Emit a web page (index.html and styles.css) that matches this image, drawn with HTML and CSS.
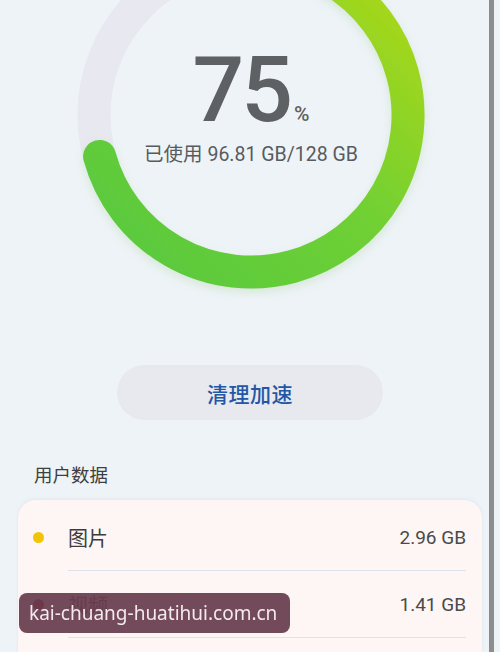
FILE: index.html
```html
<!DOCTYPE html>
<html lang="zh-CN">
<head>
<meta charset="utf-8">
<title>存储</title>
<link rel="stylesheet" href="styles.css">
</head>
<body>
<div class="page">
  <section class="hero">
    <svg class="ring" width="500" height="300" viewBox="0 0 500 300" aria-hidden="true">
      <defs>
        <linearGradient id="g" gradientUnits="userSpaceOnUse" x1="120" y1="270" x2="390" y2="0">
          <stop offset="0" stop-color="#58c93e"/>
          <stop offset="0.55" stop-color="#6fd034"/>
          <stop offset="1" stop-color="#a6d71b"/>
        </linearGradient>
        <filter id="sh" x="-20%" y="-20%" width="140%" height="140%">
          <feDropShadow dx="0" dy="4" stdDeviation="5" flood-color="#7fbf60" flood-opacity="0.22"/>
        </filter>
      </defs>
      <circle cx="251" cy="115" r="157" fill="none" stroke="#e8e8f0" stroke-width="33"/>
      <path d="M 99.6 156.4 A 157 157 0 1 0 209.6 -36.4" fill="none" stroke="url(#g)" stroke-width="33" stroke-linecap="round" filter="url(#sh)"/>
    </svg>
    <div class="usage">
      <div class="percent"><span class="num">75</span><span class="pct">%</span></div>
      <div class="used">已使用 96.81 GB/128 GB</div>
    </div>
  </section>

  <div class="action">
    <button class="clean">清理加速</button>
  </div>

  <h2 class="section-title">用户数据</h2>

  <div class="card">
    <div class="row">
      <span class="dot dot-yellow"></span>
      <div class="row-body">
        <span class="label">图片</span>
        <span class="size">2.96 GB</span>
      </div>
    </div>
    <div class="row">
      <span class="dot dot-red"></span>
      <div class="row-body">
        <span class="label">视频</span>
        <span class="size">1.41 GB</span>
      </div>
    </div>
  </div>
</div>

<div class="edge-bar"></div>
<div class="watermark">kai-chuang-huatihui.com.cn</div>
</body>
</html>
```

FILE: styles.css
```css
* {
  box-sizing: border-box;
}

html, body {
  margin: 0;
  padding: 0;
}

body {
  width: 500px;
  height: 652px;
  overflow: hidden;
  background: #eef3f7;
  font-family: "Roboto", "Noto Sans CJK SC", sans-serif;
  color: #444;
}

.page {
  width: 500px;
}

.hero {
  display: grid;
  height: 300px;
}

.ring,
.usage {
  grid-area: 1 / 1;
}

.ring {
  display: block;
}

.usage {
  display: flex;
  flex-direction: column;
  align-items: center;
  padding-top: 45px;
  padding-left: 2px;
}

.percent {
  display: flex;
  align-items: baseline;
  color: #5e6163;
  line-height: 1;
}

.num {
  font-family: "Roboto", sans-serif;
  font-size: 91px;
  font-weight: 500;
  letter-spacing: -3px;
}

.pct {
  font-family: "Roboto", sans-serif;
  font-size: 21px;
  font-weight: 500;
  margin-left: 4px;
}

.used {
  margin-top: 6px;
  font-size: 19.5px;
  line-height: 26px;
  color: #585b5e;
}

.action {
  display: flex;
  justify-content: center;
  padding-top: 65px;
}

.clean {
  width: 266px;
  height: 55px;
  border: none;
  border-radius: 28px;
  background: #e8e9ee;
  color: #2456a6;
  font-family: "Noto Sans CJK SC", sans-serif;
  font-size: 21px;
  font-weight: 500;
  letter-spacing: 0.5px;
  padding: 0;
}

.section-title {
  margin: 0;
  padding: 43px 0 0 34px;
  font-size: 18.5px;
  font-weight: 400;
  line-height: 26px;
  color: #3f3f3f;
  height: 80px;
}

.card {
  margin: 0 18px;
  padding-top: 4px;
  padding-bottom: 40px;
  background: #fdf6f5;
  border-radius: 18px;
  box-shadow: 0 -1px 3px rgba(200, 210, 225, 0.35);
}

.row {
  display: flex;
  align-items: stretch;
  padding-left: 15px;
  padding-right: 16px;
}

.dot {
  flex: none;
  width: 11px;
  height: 11px;
  border-radius: 50%;
  align-self: center;
  margin-right: 24px;
}

.dot-yellow { background: #f1c40a; }
.dot-red { background: #a3191d; }

.row-body {
  flex: 1;
  display: flex;
  justify-content: space-between;
  align-items: center;
  height: 67px;
  border-bottom: 1px solid #dfe2e8;
}

.label {
  font-size: 20px;
  color: #3c3c3c;
}

.size {
  font-size: 19px;
  color: #4a4a4a;
}

.edge-bar {
  position: fixed;
  top: 0;
  left: 489px;
  width: 5px;
  height: 652px;
  background: #8b8d8f;
}

.watermark {
  position: fixed;
  left: 19px;
  top: 593px;
  width: 271px;
  height: 40px;
  border-radius: 8px;
  background: rgba(104, 60, 78, 0.93);
  color: #f3eaee;
  font-family: "Noto Sans", sans-serif;
  font-size: 19px;
  line-height: 40px;
  padding-left: 10px;
  white-space: nowrap;
  overflow: hidden;
}
```
